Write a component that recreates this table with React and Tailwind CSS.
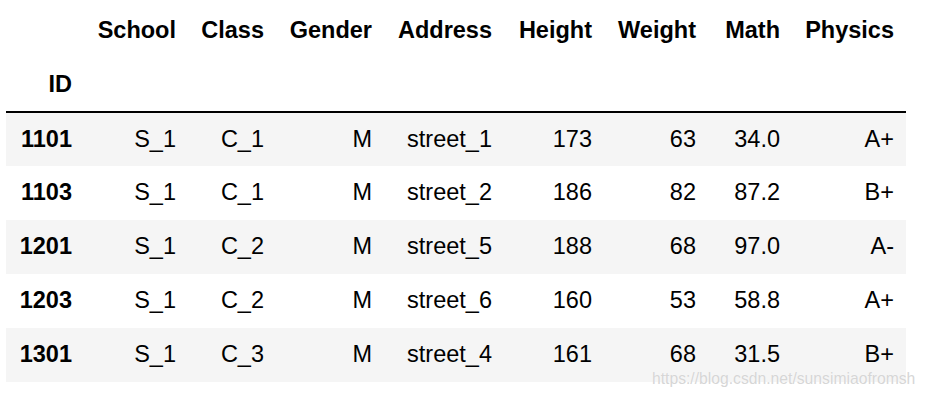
import React from 'react';

const COLUMNS = ['School', 'Class', 'Gender', 'Address', 'Height', 'Weight', 'Math', 'Physics'];
const WIDTHS  = ['w-[78px]', 'w-[104px]', 'w-[88px]', 'w-[108px]', 'w-[120px]', 'w-[100px]', 'w-[104px]', 'w-[84px]', 'w-[114px]'];

const ROWS = [
  ['1101', 'S_1', 'C_1', 'M', 'street_1', '173', '63', '34.0', 'A+'],
  ['1103', 'S_1', 'C_1', 'M', 'street_2', '186', '82', '87.2', 'B+'],
  ['1201', 'S_1', 'C_2', 'M', 'street_5', '188', '68', '97.0', 'A-'],
  ['1203', 'S_1', 'C_2', 'M', 'street_6', '160', '53', '58.8', 'A+'],
  ['1301', 'S_1', 'C_3', 'M', 'street_4', '161', '68', '31.5', 'B+'],
];

export default function App() {
  return (
    <div
      className="relative w-[926px] h-[398px] bg-white text-black overflow-hidden"
      style={{ fontFamily: '"Liberation Sans", Arial, Helvetica, sans-serif' }}
    >
      <div className="pt-[4px] pl-[6px]">
        <table className="table-fixed border-collapse w-[900px] text-[23.5px] leading-none">
          <colgroup>
            {WIDTHS.map((w, i) => <col key={i} className={w} />)}
          </colgroup>
          <thead>
            <tr className="h-[54px]">
              <th className="px-[12px] text-right align-middle"></th>
              {COLUMNS.map(c => (
                <th key={c} className="px-[12px] text-right align-middle font-bold">{c}</th>
              ))}
            </tr>
            <tr className="h-[54px] border-b-[2px] border-black">
              <th className="px-[12px] text-right align-middle font-bold">ID</th>
              {COLUMNS.map(c => <th key={c} className="px-[12px]"></th>)}
            </tr>
          </thead>
          <tbody>
            {ROWS.map((row, r) => (
              <tr key={row[0]} className={r % 2 === 0 ? 'h-[54px] bg-[#f5f5f5]' : 'h-[54px] bg-white'}>
                {row.map((v, i) => (
                  <td
                    key={i}
                    className={i === 0
                      ? 'px-[12px] text-right align-middle font-bold'
                      : 'px-[12px] text-right align-middle font-normal'}
                  >
                    {v}
                  </td>
                ))}
              </tr>
            ))}
          </tbody>
        </table>
      </div>
      {/* csdn watermark over the table corner */}
      <div className="absolute left-[652px] top-[371px] text-[15.7px] leading-none text-[#d6d6d6] whitespace-nowrap [text-shadow:0_0_1px_#ffffff]">
        https://blog.csdn.net/sunsimiaofromsh
      </div>
    </div>
  );
}
